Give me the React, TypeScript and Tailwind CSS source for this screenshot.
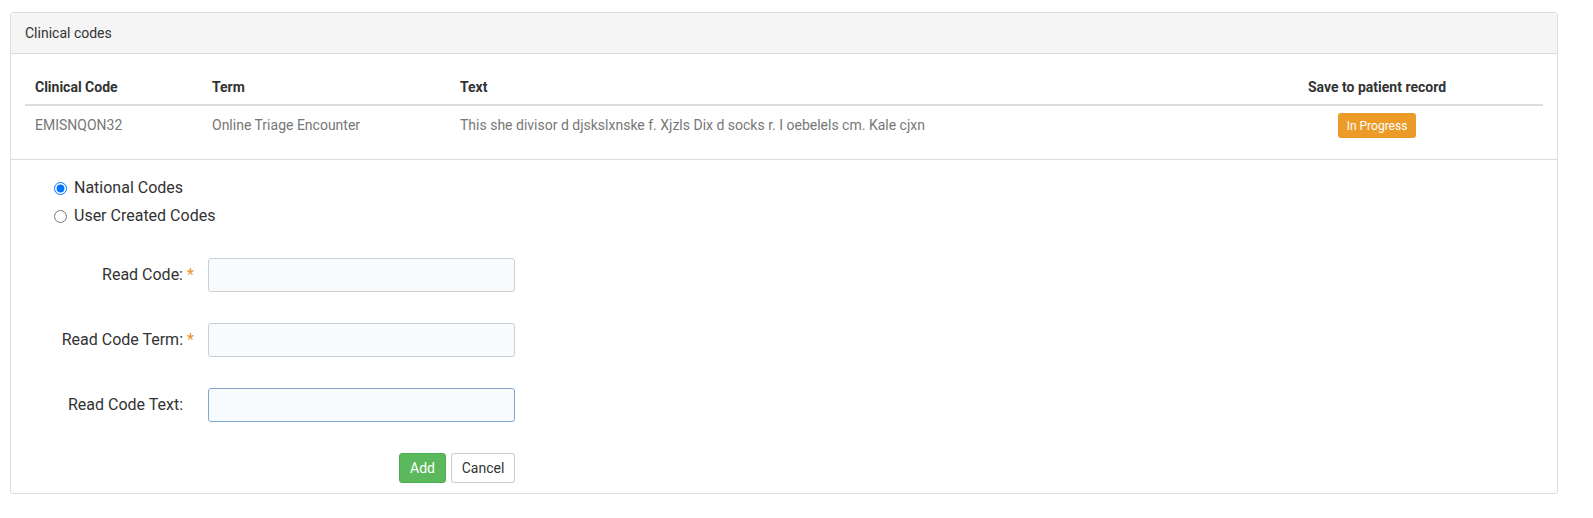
import { useState } from 'react'

const rows = [
  {
    code: 'EMISNQON32',
    term: 'Online Triage Encounter',
    text: 'This she divisor d djskslxnske f. Xjzls Dix d socks r. I oebelels cm. Kale cjxn',
    status: 'In Progress',
  },
]

function Field({ label, required, focused }: { label: string; required?: boolean; focused?: boolean }) {
  return (
    <div className="flex items-center">
      <label className="w-[172px] text-right text-[16px] text-[#333]">{label}</label>
      <span className="w-[25px] pl-[4px] text-[16px] text-[#e8952b]">{required ? '*' : ''}</span>
      <input
        type="text"
        className={
          focused
            ? 'h-[34px] w-[307px] rounded-[3px] border border-[#7fa7cf] bg-[#f8fbfd] outline-none'
            : 'h-[34px] w-[307px] rounded-[3px] border border-[#cfcfcf] bg-[#f8fbfd] outline-none'
        }
      />
    </div>
  )
}

export default function App() {
  const [kind, setKind] = useState('national')

  return (
    <div className="pl-[10px] pr-[35px] pt-[12px]" style={{ fontFamily: 'Roboto, "Liberation Sans", sans-serif' }}>
      <div className="rounded-[3px] border border-[#dddddd] bg-white">
        <div className="flex h-[41px] items-center border-b border-[#dddddd] bg-[#f5f5f5] px-[14px] text-[14px] text-[#333]">
          Clinical codes
        </div>

        <div className="border-b border-[#dddddd] px-[14px] pb-[14px] pt-[16px]">
          <div className="grid grid-cols-[187px_248px_1fr_332px] border-b-2 border-[#dddddd] text-[14px] font-bold leading-[18px] text-[#333]">
            <div className="pl-[10px] py-[8px]">Clinical Code</div>
            <div className="py-[8px]">Term</div>
            <div className="py-[8px]">Text</div>
            <div className="py-[8px] text-center">Save to patient record</div>
          </div>
          {rows.map((r) => (
            <div
              key={r.code}
              className="grid grid-cols-[187px_248px_1fr_332px] items-center text-[14px] text-[#777]"
            >
              <div className="pl-[10px] py-[7px]">{r.code}</div>
              <div className="py-[7px]">{r.term}</div>
              <div className="py-[7px]">{r.text}</div>
              <div className="flex justify-center py-[7px]">
                <span className="flex h-[25px] w-[78px] items-center justify-center rounded-[3px] bg-[#ec9a28] text-[12px] text-white">
                  {r.status}
                </span>
              </div>
            </div>
          ))}
        </div>

        <div className="pb-[10px] pt-[14px]">
          <div className="flex flex-col pl-[43px] text-[16px] leading-[22px] text-[#333]">
            <label className="flex h-[28px] items-center gap-[7px]">
              <input
                type="radio"
                name="kind"
                checked={kind === 'national'}
                onChange={() => setKind('national')}
                className="m-0 h-[13px] w-[13px]"
              />
              National Codes
            </label>
            <label className="flex h-[28px] items-center gap-[7px]">
              <input
                type="radio"
                name="kind"
                checked={kind === 'user'}
                onChange={() => setKind('user')}
                className="m-0 h-[13px] w-[13px]"
              />
              User Created Codes
            </label>
          </div>

          <div className="mt-[28px] flex flex-col gap-[31px]">
            <Field label="Read Code:" required />
            <Field label="Read Code Term:" required />
            <Field label="Read Code Text:" focused />
          </div>

          <div className="mt-[31px] flex w-[504px] justify-end gap-[5px]">
            <button
              type="button"
              className="h-[30px] w-[47px] rounded-[3px] border border-[#4cae4c] bg-[#5cb85c] text-[14px] text-white"
            >
              Add
            </button>
            <button
              type="button"
              className="h-[30px] w-[64px] rounded-[3px] border border-[#cccccc] bg-white text-[14px] text-[#333]"
            >
              Cancel
            </button>
          </div>
        </div>
      </div>
    </div>
  )
}
